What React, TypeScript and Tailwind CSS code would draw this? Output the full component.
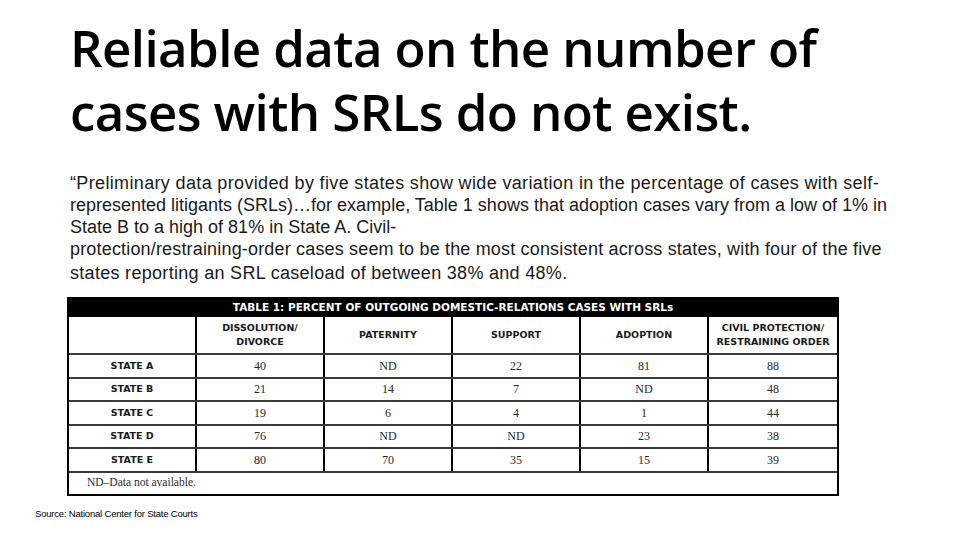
import React from 'react';

const COLUMNS = [
  ['DISSOLUTION/', 'DIVORCE'],
  ['PATERNITY'],
  ['SUPPORT'],
  ['ADOPTION'],
  ['CIVIL PROTECTION/', 'RESTRAINING ORDER'],
];

const ROWS = [
  { state: 'STATE A', values: ['40', 'ND', '22', '81', '88'] },
  { state: 'STATE B', values: ['21', '14', '7', 'ND', '48'] },
  { state: 'STATE C', values: ['19', '6', '4', '1', '44'] },
  { state: 'STATE D', values: ['76', 'ND', 'ND', '23', '38'] },
  { state: 'STATE E', values: ['80', '70', '35', '15', '39'] },
];

// quote lines, each with its own spacing so the line ends match the slide
const QUOTE = [
  { text: '“Preliminary data provided by five states show wide variation in the percentage of cases with self-', cls: 'tracking-[0.35px]' },
  { text: 'represented litigants (SRLs)…for example, Table 1 shows that adoption cases vary from a low of 1% in', cls: 'tracking-[0px]' },
  { text: 'State B to a high of 81% in State A. Civil-', cls: 'tracking-[0px]' },
  { text: 'protection/restraining-order cases seem to be the most consistent across states, with four of the five', cls: 'tracking-[0.17px]' },
  { text: 'states reporting an SRL caseload of between 38% and 48%.', cls: 'tracking-[0.3px] mt-[2px]' },
];

function SrlTable() {
  return (
    <div className="ml-[67px] mt-[13px] w-[772px] border-2 border-black">
      {/* black caption bar */}
      <div className="h-[18px] bg-black flex items-center justify-center text-white text-[10.5px] font-bold font-['DejaVu_Sans',sans-serif]">
        TABLE 1: PERCENT OF OUTGOING DOMESTIC-RELATIONS CASES WITH SRLs
      </div>
      <div className="grid grid-cols-6">
        <div className="h-[36px] border-r-2 border-black" />
        {COLUMNS.map((lines, i) => (
          <div
            key={i}
            className={`h-[36px] flex flex-col items-center justify-center leading-[14px] text-[9.5px] font-bold text-[#1a1a1a] font-['DejaVu_Sans',sans-serif] ${i < 4 ? 'border-r-2 border-black' : ''}`}
          >
            {lines.map((l) => (
              <span key={l}>{l}</span>
            ))}
          </div>
        ))}
      </div>
      {ROWS.map((row) => (
        <div key={row.state} className="grid grid-cols-6 border-t-2 border-[#3a3a3a]">
          <div className="h-[21.5px] flex items-center justify-center border-r-2 border-black text-[9.5px] font-bold text-[#1a1a1a] font-['DejaVu_Sans',sans-serif]">
            {row.state}
          </div>
          {row.values.map((v, i) => (
            <div
              key={i}
              className={`h-[21.5px] flex items-center justify-center text-[12px] text-[#2a2a2a] font-['Liberation_Serif',serif] ${i < 4 ? 'border-r-2 border-black' : ''}`}
            >
              {v}
            </div>
          ))}
        </div>
      ))}
      <div className="h-[23px] border-t-2 border-[#3a3a3a] flex items-center pl-[18px] text-[11.5px] text-[#2a2a2a] font-['Liberation_Serif',serif]">
        ND–Data not available.
      </div>
    </div>
  );
}

export default function App() {
  return (
    <div className="w-[960px] h-[540px] bg-white overflow-hidden relative font-['Open_Sans',sans-serif] text-black">
      <h1 className="pl-[70px] pt-[15px] text-[51px] leading-[64px] font-semibold tracking-[-0.6px]">
        Reliable data on the number of
        <br />
        cases with SRLs do not exist.
      </h1>
      <div className="pl-[70px] mt-[29px] text-[18px] leading-[22px] text-[#1a1a1a] font-['Liberation_Sans',sans-serif] whitespace-nowrap">
        {QUOTE.map((line) => (
          <p key={line.text} className={line.cls}>
            {line.text}
          </p>
        ))}
      </div>
      <SrlTable />
      <div className="pl-[35px] mt-[11px] text-[9.5px] text-black font-['Liberation_Sans',sans-serif] tracking-[-0.2px]">
        Source: National Center for State Courts
      </div>
    </div>
  );
}
